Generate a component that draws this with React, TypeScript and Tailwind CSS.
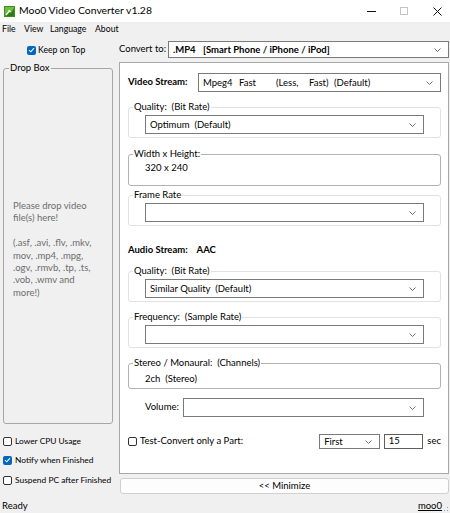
import React from 'react';
import clsx from 'clsx';

function Chevron() {
  return (
    <svg width="7" height="4" viewBox="0 0 7 4" className="shrink-0">
      <path d="M0.5 0.5 L3.5 3.5 L6.5 0.5" fill="none" stroke="#707070" strokeWidth="1" />
    </svg>
  );
}

function Select({ children, className }: { children?: React.ReactNode; className?: string }) {
  return (
    <div
      className={clsx(
        'flex items-center border border-[#7a7a7a] bg-white pl-[4px] pr-[7px] leading-[12px]',
        className
      )}
    >
      <div className="flex flex-1 items-center overflow-hidden whitespace-pre">{children}</div>
      <Chevron />
    </div>
  );
}

function CheckBox({ checked }: { checked?: boolean }) {
  if (checked) {
    return (
      <span className="flex h-[9px] w-[9px] shrink-0 items-center justify-center rounded-[2px] bg-[#0067c0]">
        <svg width="7" height="6" viewBox="0 0 7 6">
          <path d="M1 3.1 L2.8 4.8 L6 1.2" fill="none" stroke="#fff" strokeWidth="1.1" />
        </svg>
      </span>
    );
  }
  return <span className="h-[9px] w-[9px] shrink-0 rounded-[2px] border border-[#333] bg-white" />;
}

function Group({
  label,
  light,
  children,
  className,
}: {
  label: string;
  light?: boolean;
  children?: React.ReactNode;
  className?: string;
}) {
  return (
    <fieldset
      className={clsx(
        'rounded-[3px] border',
        light ? 'border-[#e2e2e2]' : 'border-[#b2b2b2]',
        className
      )}
    >
      <legend className="ml-[4px] whitespace-pre px-[1px] leading-[12px]">{label}</legend>
      {children}
    </fieldset>
  );
}

function AppIcon() {
  return (
    <svg width="11" height="11" viewBox="0 0 11 11">
      <rect width="11" height="11" fill="#3c8f22" />
      <rect x="1" y="1" width="9" height="9" fill="#6cbf3a" />
      <path d="M1 10 L5 5 L7 7 L10 2 L10 10 Z" fill="#2f7a1a" />
      <path d="M2 9 L6 4.5 M6 4.5 L4.3 4.5 M6 4.5 L6 6.2" stroke="#fff" strokeWidth="1.2" fill="none" />
    </svg>
  );
}

export default function App() {
  return (
    <div className="flex h-[513px] w-[450px] flex-col overflow-hidden bg-[#f0f0f0] text-[9.5px] text-black [font-family:'Lato','Noto_Sans',sans-serif]">
      {/* Title bar */}
      <div className="flex h-[22px] shrink-0 items-center bg-white">
        <div className="ml-[4px]">
          <AppIcon />
        </div>
        <span className="ml-[4px] text-[10.4px]">Moo0 Video Converter v1.28</span>
        <div className="ml-auto flex items-center">
          <svg width="9" height="9" viewBox="0 0 9 9" className="mr-[24px]">
            <path d="M0 4.5 H9" stroke="#111" strokeWidth="1" />
          </svg>
          <svg width="8" height="8" viewBox="0 0 8 8" className="mr-[25px]">
            <rect x="0.5" y="0.5" width="7" height="7" fill="none" stroke="#c4c4c4" strokeWidth="1" />
          </svg>
          <svg width="9" height="9" viewBox="0 0 9 9" className="mr-[8px]">
            <path d="M0.5 0.5 L8.5 8.5 M8.5 0.5 L0.5 8.5" stroke="#111" strokeWidth="1" />
          </svg>
        </div>
      </div>

      {/* Menu bar */}
      <div className="flex h-[14px] shrink-0 items-center bg-[#f0f0f0] text-[8.7px]">
        <span className="ml-[2px] w-[22px]">File</span>
        <span className="w-[26px]">View</span>
        <span className="w-[45px]">Language</span>
        <span>About</span>
      </div>

      {/* Body */}
      <div className="flex h-[463px] shrink-0">
        {/* Left column */}
        <div className="flex w-[119px] shrink-0 flex-col">
          <div className="mt-[8px] flex h-[12px] items-center gap-[2px] pl-[27px] text-[8.7px]">
            <CheckBox checked />
            <span>Keep on Top</span>
          </div>

          <fieldset className="ml-[3px] mt-[6px] h-[362px] w-[110px] rounded-[3px] border border-[#a6a6a6]">
            <legend className="ml-[5px] px-[1px] leading-[12px]">Drop Box</legend>
            <div className="whitespace-nowrap pl-[9px] pt-[126px] leading-[12.4px] text-[#6d6d6d]">
              Please drop video
              <br />
              file(s) here!
              <br />
              <br />
              (.asf, .avi, .flv, .mkv,
              <br />
              mov, .mp4, .mpg,
              <br />
              .ogv, .rmvb, .tp, .ts,
              <br />
              .vob, .wmv and
              <br />
              more!)
            </div>
          </fieldset>

          <div className="mt-[11px] flex h-[12px] items-center gap-[3px] whitespace-nowrap pl-[3px] text-[8.4px]">
            <CheckBox />
            <span>Lower CPU Usage</span>
          </div>
          <div className="mt-[7px] flex h-[12px] items-center gap-[3px] whitespace-nowrap pl-[3px] text-[8.4px]">
            <CheckBox checked />
            <span>Notify when Finished</span>
          </div>
          <div className="mt-[8px] flex h-[12px] items-center gap-[3px] whitespace-nowrap pl-[3px] text-[8.4px]">
            <CheckBox />
            <span>Suspend PC after Finished</span>
          </div>
        </div>

        {/* Right column */}
        <div className="flex w-[330px] shrink-0 flex-col">
          <div className="mt-[5px] flex h-[17px] items-center">
            <span className="w-[49px]">Convert to:</span>
            <Select className="h-[17px] flex-1 font-bold">
              <span className="w-[30px]">.MP4</span>
              <span>[Smart Phone / iPhone / iPod]</span>
            </Select>
          </div>

          <div className="mt-[4px] flex h-[412px] flex-col border border-[#a8a8a8] bg-white pl-[8px] pr-[7px]">
            {/* Video stream */}
            <div className="mt-[10px] flex h-[19px] items-center">
              <span className="w-[70px] font-bold">Video Stream:</span>
              <Select className="h-[19px] flex-1">
                <span className="w-[36px]">Mpeg4</span>
                <span className="w-[37px]">Fast</span>
                <span className="w-[33px]">(Less,</span>
                <span className="w-[25px]">Fast)</span>
                <span>(Default)</span>
              </Select>
            </div>

            <Group label="Quality:  (Bit Rate)" light className="mt-[9px] pb-[3px]">
              <Select className="ml-[16px] mt-[2px] h-[19px] w-[279px]">Optimum  (Default)</Select>
            </Group>

            <Group label="Width x Height:" className="mt-[10px] pb-[11px]">
              <div className="mt-[2px] pl-[16px] leading-[12px]">320 x 240</div>
            </Group>

            <Group label="Frame Rate" light className="mt-[3px] pb-[3px]">
              <Select className="ml-[16px] mt-[2px] h-[19px] w-[279px]" />
            </Group>

            {/* Audio stream */}
            <div className="mt-[18px] whitespace-pre font-bold leading-[12px]">Audio Stream:    AAC</div>

            <Group label="Quality:  (Bit Rate)" light className="mt-[9px] pb-[3px]">
              <Select className="ml-[16px] mt-[2px] h-[19px] w-[279px]">Similar Quality  (Default)</Select>
            </Group>

            <Group label="Frequency:  (Sample Rate)" light className="mt-[9px] pb-[3px]">
              <Select className="ml-[16px] mt-[2px] h-[19px] w-[279px]" />
            </Group>

            <Group label="Stereo / Monaural:  (Channels)" className="mt-[9px] pb-[3px]">
              <div className="mt-[4px] whitespace-pre pl-[16px] leading-[12px]">2ch  (Stereo)</div>
            </Group>

            <div className="mt-[9px] flex h-[19px] items-center pl-[17px]">
              <span className="w-[38px]">Volume:</span>
              <Select className="h-[19px] w-[241px]" />
            </div>

            {/* Test convert */}
            <div className="mt-[17px] flex h-[15px] items-center">
              <CheckBox />
              <span className="ml-[3px] w-[181px] whitespace-nowrap">Test-Convert only a Part:</span>
              <Select className="h-[15px] w-[61px]">First</Select>
              <div className="ml-[4px] flex h-[15px] w-[40px] items-center border border-[#5f5f5f] bg-white pl-[4px]">
                15
              </div>
              <span className="ml-[4px]">sec</span>
            </div>
          </div>

          <button className="ml-[1px] mt-[4px] flex h-[16px] w-[329px] items-center justify-center rounded-[3px] border border-[#cfcfcf] bg-[#fdfdfd] text-[9.5px]">
            &lt;&lt; Minimize
          </button>
        </div>
      </div>

      {/* Status bar */}
      <div className="flex h-[14px] shrink-0 items-center">
        <span className="ml-[2px]">Ready</span>
        <span className="ml-auto underline">moo0</span>
        <svg width="5" height="5" viewBox="0 0 5 5" className="mb-[-6px] ml-[2px] mr-[1px]">
          <rect x="3" y="0" width="1" height="1" fill="#999" />
          <rect x="0" y="3" width="1" height="1" fill="#999" />
          <rect x="3" y="3" width="1" height="1" fill="#999" />
        </svg>
      </div>
    </div>
  );
}
